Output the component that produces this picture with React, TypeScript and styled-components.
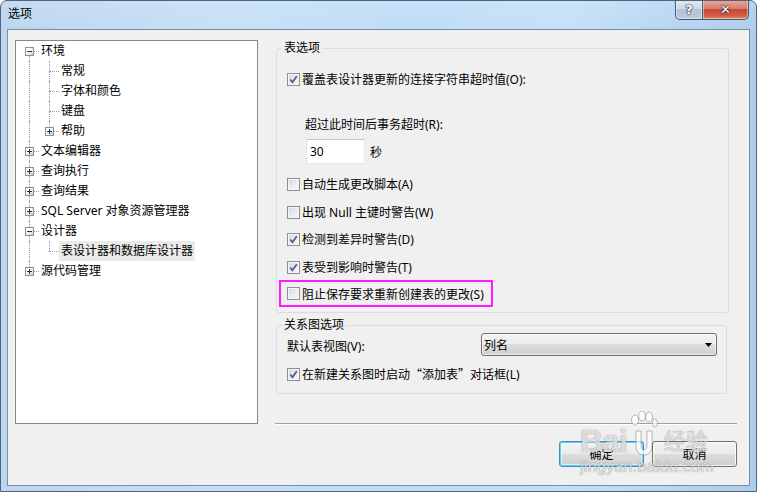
import React from "react";
import styled, { createGlobalStyle } from "styled-components";

const FONT = `"Noto Sans", "Noto Sans CJK SC", sans-serif`;

const GlobalStyle = createGlobalStyle`
  html, body { margin: 0; padding: 0; background: #ffffff; }
  body { font-family: ${FONT}; font-size: 12px; color: #000; }
  * { box-sizing: border-box; }
`;

const Window = styled.div`
  position: relative;
  width: 757px;
  height: 492px;
  display: flex;
  flex-direction: column;
  border: 1px solid #4f647a;
  border-radius: 7px 7px 0 0;
  background:
    linear-gradient(to bottom, rgba(255,255,255,0.12), rgba(255,255,255,0) 30px),
    linear-gradient(to right, #bcd6ef 0%, #c6e0f7 30%, #bfdcf7 55%, #c4e0f8 75%, #aecdec 100%);
  overflow: hidden;
`;

const TitleBar = styled.div`
  height: 28px;
  display: flex;
  align-items: flex-start;
  padding-left: 7px;
`;

const Title = styled.div`
  padding-top: 5px;
  line-height: 16px;
  font-size: 12px;
  color: #000;
`;

const CaptionButtons = styled.div`
  margin-left: auto;
  margin-right: 7px;
  margin-top: -1px;
  display: flex;
`;

const CaptionButton = styled.div<{ $close?: boolean }>`
  width: ${(p) => (p.$close ? "46px" : "28px")};
  height: 20px;
  display: flex;
  align-items: center;
  justify-content: center;
  border: 1px solid #4a5a6e;
  border-top: none;
  border-left: ${(p) => (p.$close ? "none" : "1px solid #4a5a6e")};
  border-radius: ${(p) => (p.$close ? "0 0 5px 0" : "0 0 0 5px")};
  background: ${(p) =>
    p.$close
      ? "linear-gradient(#e9a99c 0%, #d67f6f 45%, #c74734 50%, #cf5a40 80%, #e08a68 100%)"
      : "linear-gradient(#e3eaf2 0%, #cfd9e5 45%, #b3c2d4 50%, #bccbdc 100%)"};
  box-shadow: inset 0 0 0 1px rgba(255, 255, 255, 0.45);
  font-family: "DejaVu Sans", sans-serif;
  font-weight: bold;
  color: #fff;
  font-size: 13px;
  line-height: 1;
  text-shadow: 0 0 1px #202a36, 0 0 1px #202a36, 0 0 2px #202a36;
`;

const Client = styled.div`
  flex: 1;
  margin: 0 6px 5px 6px;
  border: 1px solid #7b8da2;
  background: #f0f0f0;
  padding: 10px 12px 0 7px;
  display: flex;
  flex-direction: column;
`;

const MainRow = styled.div`
  height: 385px;
  display: flex;
  align-items: flex-start;
`;

const Tree = styled.div`
  width: 243px;
  height: 384px;
  flex-shrink: 0;
  background: #fff;
  border: 1px solid #828790;
  padding-left: 3px;
`;

const TreeRow = styled.div`
  display: flex;
  height: 20px;
  align-items: stretch;
`;

const TreeCell = styled.span<{ $up?: boolean; $down?: boolean; $h?: boolean }>`
  position: relative;
  width: 20px;
  flex-shrink: 0;
  &::before {
    content: "";
    position: absolute;
    left: 10px;
    top: ${(p) => (p.$up ? "0" : "10px")};
    bottom: ${(p) => (p.$down ? "0" : "10px")};
    border-left: 1px dotted #9a9a9a;
    display: ${(p) => (p.$up || p.$down ? "block" : "none")};
  }
  &::after {
    content: "";
    position: absolute;
    left: 10px;
    right: 0;
    top: 10px;
    border-top: 1px dotted #9a9a9a;
    display: ${(p) => (p.$h ? "block" : "none")};
  }
`;

const Expander = styled.span<{ $open: boolean }>`
  position: absolute;
  left: 6px;
  top: 6px;
  width: 9px;
  height: 9px;
  z-index: 1;
  border: 1px solid #919191;
  background: linear-gradient(135deg, #ffffff 35%, #c9c9c9 100%);
  &::before {
    content: "";
    position: absolute;
    left: 1px;
    top: 3px;
    width: 5px;
    height: 1px;
    background: #1e3050;
  }
  &::after {
    content: "";
    position: absolute;
    left: 3px;
    top: 1px;
    width: 1px;
    height: 5px;
    background: #1e3050;
    display: ${(p) => (p.$open ? "none" : "block")};
  }
`;

const TreeLabel = styled.span<{ $selected?: boolean }>`
  padding: 0 2px;
  line-height: 20px;
  white-space: nowrap;
  background: ${(p) => (p.$selected ? "#eaeaea" : "transparent")};
`;

const RightCol = styled.div`
  flex: 1;
  height: 100%;
  margin-left: 17px;
  display: flex;
  flex-direction: column;
`;

const Group = styled.fieldset<{ $mr: number; $mt?: number }>`
  margin: ${(p) => p.$mt ?? 0}px ${(p) => p.$mr}px 0 1px;
  padding: 0;
  min-width: 0;
  border: 1px solid #d5dfe5;
  border-radius: 3px;
`;

const GroupTitle = styled.legend`
  margin-left: 5px;
  padding: 0 2px;
  line-height: 16px;
  font-size: 12px;
`;

const GroupBody = styled.div<{ $pad: string }>`
  display: flex;
  flex-direction: column;
  padding: ${(p) => p.$pad};
`;

const CheckRow = styled.div<{ $mt?: number }>`
  display: flex;
  align-items: center;
  gap: 2px;
  height: 20px;
  margin-top: ${(p) => p.$mt ?? 0}px;
  white-space: nowrap;
`;

const Highlight = styled.div`
  align-self: flex-start;
  display: flex;
  align-items: center;
  gap: 2px;
  height: 27px;
  margin: 3px 0 0 -8px;
  padding: 0 7px 0 6px;
  border: 2px solid #ff1aff;
  white-space: nowrap;
`;

const Box = styled.span`
  width: 13px;
  height: 13px;
  flex-shrink: 0;
  border: 1px solid #8e8f8f;
  background: linear-gradient(135deg, #d2d5da 0%, #eceef0 60%, #fafafa 100%);
  box-shadow: inset 0 0 0 1px #f6f6f6;
  display: flex;
  align-items: center;
  justify-content: center;
`;

const Quote = styled.span`
  font-family: "Noto Sans CJK SC", sans-serif;
`;

const TextLine = styled.div<{ $mt: number; $pl: number }>`
  margin-top: ${(p) => p.$mt}px;
  padding-left: ${(p) => p.$pl}px;
  line-height: 20px;
  white-space: nowrap;
`;

const InputRow = styled.div`
  margin-top: 4px;
  padding-left: 19px;
  display: flex;
  align-items: center;
  height: 25px;
`;

const TextBox = styled.div`
  width: 59px;
  height: 25px;
  background: #fff;
  border: 1px solid;
  border-color: #c5c8ce #e3e9ef #e3e9ef #dfe3e8;
  padding: 0 3px;
  line-height: 23px;
`;

const Unit = styled.span`
  margin-left: 5px;
`;

const SelectRow = styled.div`
  display: flex;
  align-items: flex-start;
  height: 23px;
`;

const SelectLabel = styled.span`
  padding-top: 6px;
  line-height: 16px;
  white-space: nowrap;
`;

const Select = styled.div`
  margin-left: auto;
  width: 236px;
  height: 23px;
  border: 1px solid #707070;
  border-radius: 3px;
  background: linear-gradient(#f3f3f3 0%, #ebebeb 50%, #dddddd 50%, #cfcfcf 100%);
  box-shadow: inset 0 0 0 1px rgba(255, 255, 255, 0.55);
  display: flex;
  align-items: center;
  padding: 0 4px 0 2px;
`;

const Arrow = styled.svg`
  margin-left: auto;
`;

const Separator = styled.div`
  margin-top: auto;
  height: 2px;
  border-top: 1px solid #a0a0a0;
  border-bottom: 1px solid #ffffff;
`;

const ButtonRow = styled.div`
  margin-top: 16px;
  display: flex;
  justify-content: flex-end;
  gap: 8px;
`;

const Button = styled.div<{ $default?: boolean }>`
  width: 85px;
  height: 26px;
  display: flex;
  align-items: center;
  justify-content: center;
  border: 1px solid ${(p) => (p.$default ? "#3c8fc8" : "#707070")};
  border-radius: 3px;
  background: linear-gradient(#f2f2f2 0%, #ebebeb 50%, #dddddd 50%, #cfcfcf 100%);
  box-shadow: ${(p) =>
    p.$default
      ? "inset 0 0 0 1px #5cd0f6, inset 0 0 0 2px rgba(255,255,255,0.5)"
      : "inset 0 0 0 1px rgba(255,255,255,0.8)"};
`;

const Watermark = styled.div`
  position: absolute;
  left: 579px;
  top: 412px;
  pointer-events: none;
  color: rgba(255, 255, 255, 0.72);
  text-shadow: 0 0 1px rgba(80, 80, 80, 0.5), 0 0 1px rgba(80, 80, 80, 0.35);
  display: flex;
  flex-direction: column;
`;

const WmLogo = styled.div`
  display: flex;
  align-items: flex-end;
  height: 46px;
`;

const WmLatin = styled.span`
  font-family: "Liberation Sans", sans-serif;
  font-weight: bold;
  font-size: 32px;
  line-height: 36px;
  letter-spacing: -1px;
`;

const WmCn = styled.span`
  font-family: "Noto Sans CJK SC", sans-serif;
  font-size: 22px;
  line-height: 36px;
  margin-left: 6px;
  margin-bottom: 2px;
`;

const WmUrl = styled.span`
  font-family: "Liberation Sans", sans-serif;
  font-size: 16px;
  line-height: 16px;
  letter-spacing: 0.3px;
`;

type Item = {
  label: string;
  level: 0 | 1;
  box?: "plus" | "minus";
  pos?: "first" | "last";
  lastChild?: boolean;
  selected?: boolean;
};

const treeItems: Item[] = [
  { label: "环境", level: 0, box: "minus", pos: "first" },
  { label: "常规", level: 1 },
  { label: "字体和颜色", level: 1 },
  { label: "键盘", level: 1 },
  { label: "帮助", level: 1, box: "plus", lastChild: true },
  { label: "文本编辑器", level: 0, box: "plus" },
  { label: "查询执行", level: 0, box: "plus" },
  { label: "查询结果", level: 0, box: "plus" },
  { label: "SQL Server 对象资源管理器", level: 0, box: "plus" },
  { label: "设计器", level: 0, box: "minus" },
  { label: "表设计器和数据库设计器", level: 1, lastChild: true, selected: true },
  { label: "源代码管理", level: 0, box: "plus", pos: "last" },
];

const Check = ({ checked }: { checked?: boolean }) => (
  <Box>
    {checked && (
      <svg width="11" height="11" viewBox="0 0 11 11">
        <path d="M2.3 5.6 L4.4 8.3 L8.8 2.2" fill="none" stroke="#4a5d8e" strokeWidth="1.7" strokeLinejoin="miter" />
      </svg>
    )}
  </Box>
);

const Paw = () => (
  <svg width="30" height="46" viewBox="0 0 30 46" style={{ marginLeft: 1, marginBottom: 2 }}>
    <g fill="rgba(255,255,255,0.72)" stroke="rgba(90,90,90,0.4)" strokeWidth="1">
      <ellipse cx="7" cy="9" rx="3.5" ry="5" />
      <ellipse cx="14" cy="5" rx="3.5" ry="5" />
      <ellipse cx="21" cy="6" rx="3.5" ry="5" />
      <ellipse cx="27" cy="12" rx="2.5" ry="4" />
      <path d="M8 20 L8 34 Q8 44 16 44 Q24 44 24 34 L24 20 L19 20 L19 34 Q19 39 16 39 Q13 39 13 34 L13 20 Z" />
    </g>
  </svg>
);

export default function App() {
  return (
    <>
      <GlobalStyle />
      <Window>
        <TitleBar>
          <Title>选项</Title>
          <CaptionButtons>
            <CaptionButton>?</CaptionButton>
            <CaptionButton $close>✕</CaptionButton>
          </CaptionButtons>
        </TitleBar>
        <Client>
          <MainRow>
            <Tree>
              {treeItems.map((it, i) => (
                <TreeRow key={i}>
                  {it.level === 0 ? (
                    <TreeCell $up={it.pos !== "first"} $down={it.pos !== "last"} $h>
                      {it.box && <Expander $open={it.box === "minus"} />}
                    </TreeCell>
                  ) : (
                    <>
                      <TreeCell $up $down />
                      <TreeCell $up $down={!it.lastChild} $h>
                        {it.box && <Expander $open={it.box === "minus"} />}
                      </TreeCell>
                    </>
                  )}
                  <TreeLabel $selected={it.selected}>{it.label}</TreeLabel>
                </TreeRow>
              ))}
            </Tree>
            <RightCol>
              <Group $mr={8}>
                <GroupTitle>表选项</GroupTitle>
                <GroupBody $pad="13px 0 5px 10px">
                  <CheckRow>
                    <Check checked />
                    <span>覆盖表设计器更新的连接字符串超时值(O):</span>
                  </CheckRow>
                  <TextLine $mt={26} $pl={18}>超过此时间后事务超时(R):</TextLine>
                  <InputRow>
                    <TextBox>30</TextBox>
                    <Unit>秒</Unit>
                  </InputRow>
                  <CheckRow $mt={10}>
                    <Check />
                    <span>自动生成更改脚本(A)</span>
                  </CheckRow>
                  <CheckRow $mt={8}>
                    <Check />
                    <span>出现 Null 主键时警告(W)</span>
                  </CheckRow>
                  <CheckRow $mt={7}>
                    <Check checked />
                    <span>检测到差异时警告(D)</span>
                  </CheckRow>
                  <CheckRow $mt={8}>
                    <Check checked />
                    <span>表受到影响时警告(T)</span>
                  </CheckRow>
                  <Highlight>
                    <Check />
                    <span>阻止保存要求重新创建表的更改(S)</span>
                  </Highlight>
                </GroupBody>
              </Group>
              <Group $mr={10} $mt={4}>
                <GroupTitle>关系图选项</GroupTitle>
                <GroupBody $pad="0 9px 9px 10px">
                  <SelectRow>
                    <SelectLabel>默认表视图(V):</SelectLabel>
                    <Select>
                      <span>列名</span>
                      <Arrow width="7" height="4" viewBox="0 0 7 4">
                        <polygon points="0,0 7,0 3.5,4" fill="#000" />
                      </Arrow>
                    </Select>
                  </SelectRow>
                  <CheckRow $mt={8}>
                    <Check checked />
                    <span>
                      在新建关系图时启动<Quote>“</Quote>添加表<Quote>”</Quote>对话框(L)
                    </span>
                  </CheckRow>
                </GroupBody>
              </Group>
              <Separator />
            </RightCol>
          </MainRow>
          <ButtonRow>
            <Button $default>确定</Button>
            <Button>取消</Button>
          </ButtonRow>
        </Client>
        <Watermark>
          <WmLogo>
            <WmLatin>Bai</WmLatin>
            <Paw />
            <WmCn>经验</WmCn>
          </WmLogo>
          <WmUrl>jingyan.baidu.com</WmUrl>
        </Watermark>
      </Window>
    </>
  );
}
